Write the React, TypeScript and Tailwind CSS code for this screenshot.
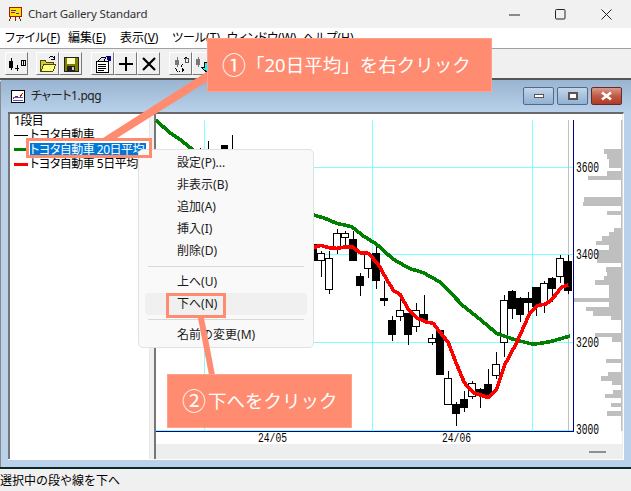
import React from "react";

const X = (z: number) => 300 + z / 3;
const Y = (z: number) => 200 + z / 3;

// x, wickTop, bodyTop, bodyBottom, wickBottom, black
const candles: [number, number, number, number, number, number][] = [
  [40, 130, 130, 176, 176, 1],
  [62, 150, 157, 178, 228, 0],
  [86, 150, 170, 265, 280, 0],
  [110, 85, 95, 137, 158, 0],
  [134, 90, 97, 109, 135, 0],
  [158, 90, 115, 176, 176, 1],
  [181, 217, 226, 253, 285, 1],
  [205, 155, 160, 200, 230, 0],
  [229, 130, 157, 238, 265, 1],
  [253, 240, 292, 296, 315, 1],
  [277, 345, 358, 400, 420, 1],
  [301, 285, 328, 346, 360, 0],
  [325, 335, 337, 398, 432, 1],
  [349, 307, 328, 376, 392, 0],
  [373, 283, 340, 355, 355, 1],
  [397, 400, 412, 424, 433, 0],
  [421, 388, 388, 518, 518, 1],
  [445, 510, 532, 610, 612, 0],
  [469, 602, 610, 637, 675, 1],
  [493, 570, 595, 617, 632, 1],
  [517, 540, 545, 585, 595, 0],
  [541, 562, 565, 575, 620, 1],
  [565, 505, 550, 585, 590, 1],
  [589, 453, 488, 523, 535, 0],
  [613, 282, 298, 424, 468, 0],
  [637, 268, 270, 322, 355, 1],
  [661, 288, 292, 340, 362, 1],
  [685, 272, 292, 304, 335, 1],
  [709, 258, 258, 315, 345, 1],
  [733, 240, 247, 310, 335, 0],
  [757, 228, 231, 260, 302, 1],
  [781, 162, 172, 226, 245, 0],
  [805, 162, 181, 268, 278, 1],
];

const greenZ = [[40, 42], [75, 52], [110, 67], [155, 77], [190, 105], [230, 130], [280, 175], [330, 203], [370, 215], [420, 243], [490, 315], [540, 355], [590, 397], [640, 415], [700, 430], [750, 422], [810, 405]];
const redZ = [[40, 140], [62, 133], [86, 140], [110, 142], [134, 138], [160, 138], [178, 155], [205, 157], [235, 190], [260, 235], [280, 268], [300, 280], [325, 325], [350, 350], [375, 362], [400, 367], [425, 400], [445, 425], [470, 490], [493, 545], [520, 575], [565, 590], [590, 565], [615, 490], [650, 425], [690, 335], [710, 315], [740, 308], [760, 290], [785, 258], [805, 252]];

const toPts = (p: number[][]) => p.map(([a, b]) => `${X(a)},${Y(b)}`).join(" ");

// y, height, left
const bars: [number, number, number][] = [
  [148, 5, 604], [153, 5, 607], [158, 9, 609], [170, 5, 607], [175, 4, 588],
  [196, 5, 584], [201, 4, 583], [210, 4, 607], [227, 4, 614], [231, 4, 609],
  [235, 5, 602], [240, 4, 596], [244, 5, 609], [249, 4, 597], [253, 9, 597],
  [266, 5, 606], [271, 4, 607], [275, 4, 604], [279, 5, 595], [284, 13, 609],
  [297, 4, 573], [301, 5, 609], [306, 4, 586], [310, 5, 593], [314, 5, 611],
  [332, 4, 595], [336, 5, 612], [358, 4, 606], [371, 4, 608], [375, 5, 601],
  [380, 4, 612], [389, 4, 613], [393, 4, 605], [402, 4, 611], [410, 5, 607],
];

const Axis = ({ x, y, w, t, s = 14 }: { x: number; y: number; w: number; t: string; s?: number }) => (
  <text x={x} y={y} textLength={w} lengthAdjust="spacingAndGlyphs" fontSize={s} fill="#000" fontFamily="'Liberation Mono', monospace">{t}</text>
);

function Chart() {
  return (
    <svg width={466} height={330} viewBox="156 113 466 330" className="block bg-white overflow-visible">
      {[204, 372, 532].map((x) => <rect key={x} x={x} y={119} width={1} height={311} fill="#80ffff" />)}
      {[166, 253, 341, 429].map((y) => <rect key={y} x={156} y={y} width={417} height={1} fill="#80ffff" />)}
      <rect x={568} y={119} width={1} height={311} fill="#c0c0c0" />
      <rect x={621} y={119} width={1.5} height={311} fill="#c0c0c0" />
      {bars.map(([y, h, l]) => <rect key={y} x={l} y={y} width={621 - l} height={h} fill="#bfbfbf" />)}
      <rect x={573} y={119} width={1} height={312} fill="#000080" />
      <rect x={156} y={430} width={418} height={1} fill="#000080" />
      <g shapeRendering="crispEdges">
        <path d="M200 147V150M208 140V150M232 134V150" stroke="#000" fill="none" />
        <rect x={221} y={144} width={7} height={6} fill="#000" />
        {candles.map(([x, wt, bt, bb, wb, black]) => {
          const cx = Math.round(X(x));
          const top = Math.round(Y(bt));
          const h = Math.max(Math.round(Y(bb)) - top, 1);
          return (
            <g key={x}>
              <rect x={cx} y={Y(wt)} width={1} height={(wb - wt) / 3} fill="#000" />
              <rect x={cx - 3.5} y={top + 0.5} width={7} height={h} fill={black ? "#000" : "#fff"} stroke="#000" />
            </g>
          );
        })}
      </g>
      <polyline points={`156,119 170,132 178,137 192,148 205,160 ${toPts(greenZ)}`} fill="none" stroke="#008000" strokeWidth={3.6} shapeRendering="crispEdges" strokeLinejoin="round" />
      <polyline points={toPts(redZ)} fill="none" stroke="#ff0000" strokeWidth={3.6} shapeRendering="crispEdges" strokeLinejoin="round" />
      <Axis x={576} y={170.5} w={23} t="3600" />
      <Axis x={576} y={257.5} w={23} t="3400" />
      <Axis x={576} y={345.5} w={23} t="3200" />
      <Axis x={576} y={432.5} w={23} t="3000" />
      <Axis x={258} y={441} w={29} t="24/05" s={13} />
      <Axis x={442} y={441} w={29} t="24/06" s={13} />
    </svg>
  );
}

const Btn = ({ children, className = "" }: { children: React.ReactNode; className?: string }) => (
  <div className={`w-[23px] h-[23px] flex items-center justify-center border border-t-white border-l-white border-r-[#777] border-b-[#777] bg-[#f0f0f0] ${className}`}>
    {children}
  </div>
);

const I = ({ children }: { children: React.ReactNode }) => (
  <svg width={18} height={18} viewBox="0 0 18 18" shapeRendering="crispEdges">{children}</svg>
);

function Toolbar() {
  return (
    <div className="h-[32px] shrink-0 border-t border-t-[#a0a0a0] border-b-2 border-b-[#555] bg-[#f0f0f0] flex items-center pl-[5px]">
      <Btn>
        <I>
          <path d="M3 3V15M9 10V16M15 5V11" stroke="#000" fill="none" />
          <rect x={1} y={6} width={4} height={7} fill="#000" />
          <path d="M7 13H11" stroke="#000" />
          <rect x={13} y={5} width={4} height={5} fill="none" stroke="#000" />
        </I>
      </Btn>
      <div className="w-[8px]" />
      <Btn>
        <I>
          <path d="M1 5H6L7 7H14V9H5L2 16H1Z" fill="#d8c840" stroke="#4a4a00" />
          <path d="M5 9H17L14 16H2Z" fill="#ffff80" stroke="#4a4a00" />
          <path d="M10 3Q13 0 15 3M15 1V4H12" stroke="#000" fill="none" />
        </I>
      </Btn>
      <Btn>
        <I>
          <rect x={2} y={2} width={14} height={14} fill="#808000" stroke="#222" />
          <rect x={5} y={3} width={8} height={6} fill="#ffffc0" />
          <rect x={5} y={11} width={8} height={5} fill="#222" />
          <rect x={10} y={12} width={2} height={3} fill="#ccc" />
        </I>
      </Btn>
      <div className="w-[9px]" />
      <Btn>
        <I>
          <rect x={2} y={6} width={12} height={11} fill="#fff" stroke="#000" />
          <path d="M4 9H12M4 11H12M4 13H12M4 15H10" stroke="#000" />
          <path d="M4 6L8 2H12L10 6Z" fill="#ddd" stroke="#000" />
          <path d="M12 1H17V6H14Z" fill="#000080" />
        </I>
      </Btn>
      <Btn>
        <I>
          <path d="M9 2V16M2 9H16" stroke="#000" strokeWidth={2} />
        </I>
      </Btn>
      <Btn>
        <svg width={18} height={18} viewBox="0 0 18 18">
          <path d="M3 3L15 15M15 3L3 15" stroke="#000" strokeWidth={2.2} />
        </svg>
      </Btn>
      <div className="w-[9px]" />
      <Btn>
        <I>
          <path d="M5 2V12" stroke="#777" fill="none" />
          <rect x={3} y={5} width={4} height={5} fill="#777" />
          <path d="M3 13L5 16L9 16M12 4L15 2M11 9L9 12" stroke="#000" strokeDasharray="1 1" fill="none" />
          <rect x={13} y={3} width={3} height={4} fill="none" stroke="#555" />
          <path d="M10 13V17L13 15Z" fill="#000" />
        </I>
      </Btn>
      <Btn>
        <I>
          <path d="M3 2V12" stroke="#777" />
          <rect x={1} y={4} width={4} height={6} fill="#777" />
          <path d="M9 7H14V12H17L11.5 17L6 12H9Z" fill="#00ffff" stroke="#000" />
        </I>
      </Btn>
    </div>
  );
}

const Acc = ({ c }: { c: string }) => <span className="underline">{c}</span>;

function MenuBar() {
  const items: [string, string, number][] = [
    ["ファイル", "F", 63],
    ["編集", "E", 52],
    ["表示", "V", 52],
    ["ツール", "T", 55],
    ["ウィンドウ", "W", 76],
    ["ヘルプ", "H", 60],
  ];
  return (
    <div className="h-[20px] shrink-0 bg-white flex items-center pl-[5px] text-[12px] text-black [font-feature-settings:'palt']">
      {items.map(([l, k, w]) => (
        <div key={k} style={{ width: w }} className="whitespace-nowrap">
          {l}(<Acc c={k} />)
        </div>
      ))}
    </div>
  );
}

function ListRow({ color, text, selected, bold }: { color?: string; text: string; selected?: boolean; bold?: boolean }) {
  return (
    <div className="h-[14.3px] flex items-center whitespace-nowrap text-[12px] leading-[14px] tracking-[-0.5px] text-black [font-feature-settings:'palt']">
      {color && (
        <div className="w-[16px] flex items-center shrink-0">
          <div className={`w-[14px] ${bold ? "h-[3px]" : "h-px"}`} style={{ background: color }} />
        </div>
      )}
      <span className={selected ? "bg-[#0078d7] text-white h-[14px] w-[116px]" : ""}>{text}</span>
    </div>
  );
}

function MdiWindow() {
  return (
    <div className="flex-1 min-h-0 flex flex-col bg-[#b9d1ea] rounded-tl-[3px] border-l border-l-[#8a8a8a] pl-[7px] pr-[7px] pb-[7px]">
      <div className="h-[32px] shrink-0 -mx-[7px] pl-[10px] pr-[9px] flex items-center bg-gradient-to-b from-[#99b4d1] to-[#b9d1ea]">
        <svg width={14} height={13} viewBox="0 0 14 13" className="shrink-0" shapeRendering="crispEdges">
          <rect x={0.5} y={0.5} width={13} height={12} fill="#fff" stroke="#000" />
          <path d="M2 9L5 6L8 8L12 3" stroke="#e00000" fill="none" />
          <path d="M2 10H12M2 7H12" stroke="#4060d0" fill="none" />
        </svg>
        <span className="ml-[6px] text-[12px] text-[#222] tracking-[-0.4px] [font-feature-settings:'palt']">チャート1.pqg</span>
        <div className="ml-auto flex gap-[3px]">
          <div className="w-[31px] h-[18px] rounded-[2px] border border-[#4f6a8a] bg-gradient-to-b from-[#c5d6e9] via-[#a9c2de] to-[#93b1d3] flex items-center justify-center">
            <div className="w-[10px] h-[4px] bg-white border border-[#555]" />
          </div>
          <div className="w-[31px] h-[18px] rounded-[2px] border border-[#4f6a8a] bg-gradient-to-b from-[#c5d6e9] via-[#a9c2de] to-[#93b1d3] flex items-center justify-center">
            <div className="w-[10px] h-[8px] bg-white border-2 border-[#555]" />
          </div>
          <div className="w-[31px] h-[18px] rounded-[2px] border border-[#6b2a20] bg-gradient-to-b from-[#d59a8c] via-[#c05a45] to-[#b03a26] flex items-center justify-center">
            <svg width={13} height={10} viewBox="0 0 13 10">
              <path d="M2 1.5L11 8.5M11 1.5L2 8.5" stroke="#fff" strokeWidth={2.6} />
            </svg>
          </div>
        </div>
      </div>
      <div className="flex-1 min-h-0 flex bg-[#f0f0f0] border-t-2 border-t-[#696969] border-b border-b-white border-r border-r-white">
        <div className="w-[142px] shrink-0 bg-white border-l-2 border-l-[#777] border-r border-r-[#e8e8e8] pl-[4px]">
          <ListRow text="1段目" />
          <ListRow color="#000" text="トヨタ自動車" />
          <ListRow color="#008000" bold text="トヨタ自動車 20日平均" selected />
          <ListRow color="#ff0000" bold text="トヨタ自動車 5日平均" />
        </div>
        <div className="w-[6px] shrink-0 bg-[#f0f0f0] border-r-2 border-r-[#777]" />
        <div className="flex flex-col flex-1 min-w-0 bg-[#eeeeee]">
          <Chart />
          <div className="flex-1 flex items-center justify-end pr-[17px]">
            <div className="w-[17px] h-[2px] bg-[#909090]" />
          </div>
        </div>
      </div>
    </div>
  );
}

const MenuItem = ({ label, k, suffix = "", active }: { label: string; k: string; suffix?: string; active?: boolean }) => (
  <div className={`h-[22px] mx-[6px] rounded-[4px] pl-[32px] flex items-center text-[12px] text-[#1a1a1a] ${active ? "bg-[#f0f0f0]" : ""}`}>
    {label}({k}){suffix}
  </div>
);

function ContextMenu() {
  return (
    <div className="absolute left-[138px] top-[149px] w-[176px] h-[199px] bg-[#f9f9f9] border border-[#e2e2e2] rounded-[5px] pt-[2px] flex flex-col">
      <MenuItem label="設定" k="P" suffix="..." />
      <MenuItem label="非表示" k="B" />
      <MenuItem label="追加" k="A" />
      <MenuItem label="挿入" k="I" />
      <MenuItem label="削除" k="D" />
      <div className="h-px bg-[#d8d8d8] mx-[9px] mt-[4px] mb-[4px]" />
      <MenuItem label="上へ" k="U" />
      <MenuItem label="下へ" k="N" active />
      <div className="h-px bg-[#d8d8d8] mx-[9px] mt-[4px] mb-[4px]" />
      <MenuItem label="名前の変更" k="M" />
    </div>
  );
}

function Annotations() {
  return (
    <>
      <svg width={631} height={491} className="absolute left-0 top-0 pointer-events-none">
        <polygon points="208,71 208,81 117,138 103,138" fill="#ff8b70" />
        <polygon points="198,318 204,318 215,375 209,375" fill="#ff8b70" />
      </svg>
      <div className="absolute left-[26px] top-[138px] w-[126px] h-[20px] border-[3px] border-[#ff8b70]" />
      <div className="absolute left-[166px] top-[293px] w-[60px] h-[25px] border-[3px] border-[#ff8b70]" />
      <div className="absolute left-[207px] top-[38px] w-[285px] h-[54px] bg-[#ff8b70] border border-[#ffa18b] flex items-center pl-[14px] text-white text-[18.5px] whitespace-nowrap">
        <span className="text-[24px] leading-none">①</span>
        <span>「20日平均」を右クリック</span>
      </div>
      <div className="absolute left-[167px] top-[374px] w-[185px] h-[54px] bg-[#ff8b70] border border-[#ffa18b] flex items-center pl-[14px] text-white text-[18.5px] whitespace-nowrap">
        <span className="text-[24px] leading-none mr-[2px]">②</span>
        <span>下へをクリック</span>
      </div>
    </>
  );
}

export default function App() {
  return (
    <div className="relative w-[631px] h-[491px] overflow-hidden flex flex-col bg-[#f0f0f0] font-['Noto_Sans','Noto_Sans_CJK_JP',sans-serif]">
      <div className="h-[28px] shrink-0 bg-[#f1f1f1] flex items-center pl-[7px]">
        <svg width={16} height={16} viewBox="0 0 16 16" shapeRendering="crispEdges">
          <path d="M2 1H14V10H2Z" fill="#ffe000" stroke="#a02000" />
          <path d="M4 4H9M9 7H12" stroke="#2040d0" />
          <path d="M4 6H8" stroke="#e00000" />
          <path d="M4 11L2 15M12 11L14 15M8 11V15" stroke="#802000" />
        </svg>
        <span className="ml-[5px] text-[11.5px] text-[#333] tracking-[-0.15px]">Chart Gallery Standard</span>
        <div className="ml-auto flex items-center">
          <div className="w-[45px] flex justify-center"><svg width={11} height={11} viewBox="0 0 11 11"><path d="M0 6H11" stroke="#222" /></svg></div>
          <div className="w-[46px] flex justify-center"><svg width={11} height={11} viewBox="0 0 11 11"><rect x={0.5} y={0.5} width={9.5} height={9.5} rx={1} fill="none" stroke="#222" /></svg></div>
          <div className="w-[46px] flex justify-center mr-[2px]"><svg width={11} height={11} viewBox="0 0 11 11"><path d="M0.5 0.5L10.5 10.5M10.5 0.5L0.5 10.5" stroke="#222" /></svg></div>
        </div>
      </div>
      <MenuBar />
      <Toolbar />
      <MdiWindow />
      <div className="h-[24px] shrink-0 border-t-2 border-t-[#0a2a2a] bg-[#f0f0f0] text-[12px] text-black flex items-center leading-none pt-[1px]">
        選択中の段や線を下へ
      </div>
      <ContextMenu />
      <Annotations />
    </div>
  );
}
